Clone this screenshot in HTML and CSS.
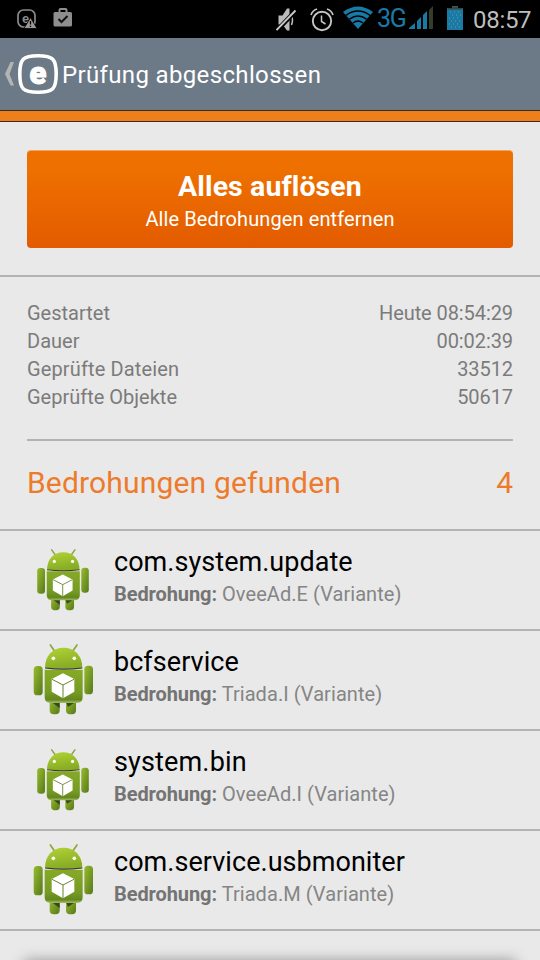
FILE: index.html
```html
<!DOCTYPE html>
<html lang="de">
<head>
<meta charset="utf-8">
<title>Prüfung abgeschlossen</title>
<link rel="stylesheet" href="styles.css">
</head>
<body>
<svg class="defs" width="0" height="0" aria-hidden="true">
  <defs>
    <linearGradient id="head" x1="0" y1="0" x2="0.3" y2="1"><stop offset="0" stop-color="#b3d335"/><stop offset="1" stop-color="#87ac25"/></linearGradient>
    <linearGradient id="torso" x1="0" y1="0" x2="0" y2="1"><stop offset="0" stop-color="#86aa26"/><stop offset="0.7" stop-color="#759a24"/><stop offset="0.9" stop-color="#64881c"/><stop offset="1" stop-color="#a5bd6a"/></linearGradient>
    <linearGradient id="limb" x1="0" y1="0" x2="1" y2="1"><stop offset="0" stop-color="#98bd2c"/><stop offset="1" stop-color="#56781b"/></linearGradient>
    <symbol id="robot" viewBox="30 40 200 220">
      <path d="M91 46l12 17M171 46l-12 17" stroke="#8aa540" stroke-width="5" stroke-linecap="round"/>
      <rect x="89" y="205" width="30" height="49" rx="12" fill="url(#limb)"/>
      <rect x="138" y="205" width="30" height="49" rx="12" fill="url(#limb)"/>
      <path d="M95 217h24v19zM138 217h28l-22 15z" fill="#39471d"/>
      <rect x="41" y="109" width="27" height="88" rx="11" fill="url(#limb)"/>
      <rect x="193" y="108" width="26" height="86" rx="11" fill="url(#limb)"/>
      <path d="M74 120h114v82q0 18-18 18H92q-18 0-18-18z" fill="url(#torso)"/>
      <path d="M75 114C75 78 98 54 131 54s56 24 56 60q-56 6-112 0z" fill="url(#head)"/>
      <path d="M75 115q56 7 112 0" fill="none" stroke="#38372a" stroke-width="3.500"/>
      <circle cx="100" cy="86" r="5.500" fill="#fff"/><circle cx="163" cy="86" r="5.500" fill="#fff"/>
      <path d="M129 131l34 17v38l-34 20-34-20v-38z" fill="#fff"/>
      <path d="M96 149l33 17 33-17M129 166v39" fill="none" stroke="#66822e" stroke-width="3"/>
    </symbol>
  </defs>
</svg>
<div class="screen">
  <header class="status">
    <svg class="st-eset" width="20" height="20" viewBox="0 0 20 20">
      <rect x="1" y="1" width="17" height="17" rx="5.500" fill="none" stroke="#8b8b8b" stroke-width="1.700"/>
      <text x="5" y="14" class="mini-e">e</text>
      <path d="M13.500 8.500L20 19.500H7z" fill="#999" stroke="#000" stroke-width=".8"/>
      <path d="M13.500 12v3.500M13.500 16.700v1.300" stroke="#000" stroke-width="1.300"/>
    </svg>
    <svg class="st-bag" width="20" height="19" viewBox="0 0 20 19">
      <path d="M6.500 5V2q0-1 1-1h5q1 0 1 1v3" fill="none" stroke="#8e8e8e" stroke-width="2"/>
      <rect x="0.500" y="4" width="18.500" height="14.500" rx="1.500" fill="#8e8e8e"/>
      <path d="M5.500 11l3 3 6-6" fill="none" stroke="#111" stroke-width="2"/>
    </svg>
    <svg class="st-mute" width="22" height="24" viewBox="0 0 22 24">
      <path d="M2.500 7.500h4L11 .5h2.500v22H11l-4.500-6h-4z" fill="#bbb"/>
      <path d="M15.500 8q2 4 0 9" fill="none" stroke="#bbb" stroke-width="1.500"/>
      <path d="M1 22.500L19 3.500" stroke="#000" stroke-width="4.500"/>
      <path d="M.5 22L19.500 2.500" stroke="#c8c8c8" stroke-width="1.900"/>
    </svg>
    <svg class="st-alarm" width="24" height="24" viewBox="0 0 24 24" fill="none" stroke="#c4c4c4">
      <circle cx="12" cy="13" r="9.200" stroke-width="1.900"/>
      <path d="M11.500 7.500v6l4 2.500" stroke-width="1.500"/>
      <path d="M1 7q1.500-4.500 6-6M23 7q-1.500-4.500-6-6" stroke-width="1.700"/>
    </svg>
    <svg class="st-wifi" width="30" height="23" viewBox="0 0 30 23">
      <path d="M0 6Q15-5 30 6L15 23z" fill="#1a7aa6"/>
      <path d="M3 9.300q12-8.500 24 0M6.500 13.200q8.500-6.500 17 0M10 17q5-4 10 0" fill="none" stroke="#000" stroke-width="1.500"/>
    </svg>
    <span class="net">3G</span>
    <svg class="st-signal" width="24" height="23" viewBox="0 0 24 23">
      <path d="M0 23v-1l6-5v6zM8 15l4-4v12H8zM14 9l4-4v18h-4z" fill="#1a7aa6"/>
      <path d="M20 4l4-4v23h-4z" fill="#343c2e"/>
    </svg>
    <svg class="st-batt" width="16" height="24" viewBox="0 0 16 24">
      <path d="M5 0h6v2h5v22H0V2h5z" fill="#1a7aa6"/>
      <path d="M5 .5h6V2h4.500v1.500H.5V2H5z" fill="#394638"/>
      <path d="M3 6h11M5 9h10M2 12h11M4 15h11M2 18h11M4 21h10" stroke="#6f9aa8" stroke-width="1" stroke-dasharray="1 3"/>
    </svg>
    <span class="clock">08:57</span>
  </header>
  <div class="titlebar">
    <svg class="back" width="10" height="24" viewBox="0 0 10 24"><path d="M9 0H5.500L0 12l5.500 11.500H9L4.500 12z" fill="#b4b5b3"/></svg>
    <svg class="logo" width="40" height="40" viewBox="0 0 40 40">
      <path d="M20 1.800C35 1.800 38.200 5 38.200 20S35 38.200 20 38.200 1.800 35 1.800 20 5 1.800 20 1.800z" fill="none" stroke="#fff" stroke-width="3.600"/>
      <text x="20" y="30" class="logo-e" text-anchor="middle">e</text>
    </svg>
    <h1>Prüfung abgeschlossen</h1>
  </div>
  <div class="stripe"></div>
  <main>
    <section class="action">
      <button class="resolve"><span class="resolve-title">Alles auflösen</span><span class="resolve-sub">Alle Bedrohungen entfernen</span></button>
    </section>
    <section class="summary">
      <dl>
        <div class="stat"><dt>Gestartet</dt><dd>Heute 08:54:29</dd></div>
        <div class="stat"><dt>Dauer</dt><dd>00:02:39</dd></div>
        <div class="stat"><dt class="wide">Geprüfte Dateien</dt><dd>33512</dd></div>
        <div class="stat"><dt>Geprüfte Objekte</dt><dd>50617</dd></div>
      </dl>
      <h2><span class="found">Bedrohungen gefunden</span><span>4</span></h2>
    </section>
    <ul class="threats">
      <li><span class="icon small"><svg><use href="#robot"/></svg></span><div><h3>com.system.update</h3><p><b>Bedrohung:</b> OveeAd.E (Variante)</p></div></li>
      <li><span class="icon"><svg><use href="#robot"/></svg></span><div><h3>bcfservice</h3><p><b>Bedrohung:</b> Triada.I (Variante)</p></div></li>
      <li><span class="icon small"><svg><use href="#robot"/></svg></span><div><h3 class="wide">system.bin</h3><p><b>Bedrohung:</b> OveeAd.I (Variante)</p></div></li>
      <li><span class="icon"><svg><use href="#robot"/></svg></span><div><h3>com.service.usbmoniter</h3><p><b>Bedrohung:</b> Triada.M (Variante)</p></div></li>
    </ul>
  </main>
  <div class="bottom-shadow"></div>
</div>
</body>
</html>
```

FILE: styles.css
```css
* { box-sizing: border-box; margin: 0; padding: 0; }
body { font-family: Roboto, "Liberation Sans", sans-serif; background: #e9e9e9; }
svg { display: block; flex: none; }
.defs { position: absolute; }
.screen { position: relative; width: 540px; height: 960px; overflow: hidden; background: #e9e9e9; }

.status { display: flex; align-items: flex-start; height: 38px; padding-left: 17px; background: #000; white-space: nowrap; }
.st-eset { margin-top: 9px; }
.st-bag { margin: 8px 0 0 16px; }
.st-mute { margin: 8px 0 0 203px; }
.st-alarm { margin: 8px 0 0 12px; }
.st-wifi { margin: 6px 0 0 9px; }
.net { margin: 3px 0 0 4px; width: 28px; font-size: 25px; line-height: 31px; color: #1a7aa6; letter-spacing: -1.200px; }
.st-signal { margin: 6px 0 0 4px; }
.st-batt { margin: 6px 0 0 14px; }
.clock { margin: 6px 0 0 10px; font-size: 24px; line-height: 28px; color: #bdbdbd; letter-spacing: -.3px; }
.mini-e { font: 900 13px "Liberation Sans", sans-serif; fill: #8b8b8b; }

.titlebar { display: flex; align-items: center; height: 72px; padding-left: 5px; background: #6c7987; color: #fff; }
.logo { margin-left: 3px; overflow: visible; }
.logo-e { font: 900 31px Roboto, sans-serif; fill: #fff; stroke: #fff; stroke-width: 1; }
.titlebar h1 { margin: 2px 0 0 4px; font-size: 24px; font-weight: 400; line-height: 30px; letter-spacing: .35px; white-space: nowrap; }
.stripe { height: 12px; background: #ee7f1b; border: solid #3a2c22; border-width: 1px 0; }

.action { height: 155px; padding: 28px 27px 0; border-bottom: 2px solid #b3b3b3; }
.resolve { display: flex; flex-direction: column; align-items: center; width: 100%; height: 98px; padding-top: 20px; border: 0; border-top: 1px solid #f3a45c; border-radius: 4px; background: linear-gradient(#ee7000 20%, #e35b00); color: #fff; font-family: inherit; white-space: nowrap; }
.resolve-title { font-size: 28.500px; font-weight: 700; line-height: 32px; letter-spacing: .1px; }
.resolve-sub { font-size: 20px; line-height: 24px; margin-top: 4px; letter-spacing: .1px; }

.summary { height: 254px; padding: 22px 27px 0; border-bottom: 2px solid #b3b3b3; }
.summary dl { height: 142px; border-bottom: 2px solid #b3b3b3; }
.stat { display: flex; justify-content: space-between; font-size: 20px; line-height: 28px; color: #7b7b7b; }
.stat .wide { letter-spacing: .13px; }
.stat dd { letter-spacing: -.08px; }
.summary h2 { display: flex; justify-content: space-between; align-items: center; height: 82px; font-size: 30px; font-weight: 400; color: #ed7b2c; white-space: nowrap; }
.found { letter-spacing: .17px; }

.threats { list-style: none; }
.threats li { display: flex; height: 100px; padding-left: 27px; gap: 15px; border-bottom: 2px solid #b3b3b3; }
.icon { display: flex; align-items: center; justify-content: center; width: 72px; height: 98px; }
.icon svg { width: 66.700px; height: 73.300px; }
.icon.small svg { width: 58px; height: 64px; }
.threats div { padding-top: 15px; white-space: nowrap; }
.threats h3 { font-size: 27px; font-weight: 400; line-height: 32px; color: #000; letter-spacing: .04px; }
.threats h3.wide { letter-spacing: .15px; }
.threats p { font-size: 20px; line-height: 24px; margin-top: 4px; color: #858585; letter-spacing: .06px; }
.threats b { color: #747474; letter-spacing: -.08px; }

.bottom-shadow { position: absolute; left: 30px; right: 30px; top: 966px; height: 10px; background: #999; box-shadow: 0 0 14px 6px rgba(0, 0, 0, .35); }
```
